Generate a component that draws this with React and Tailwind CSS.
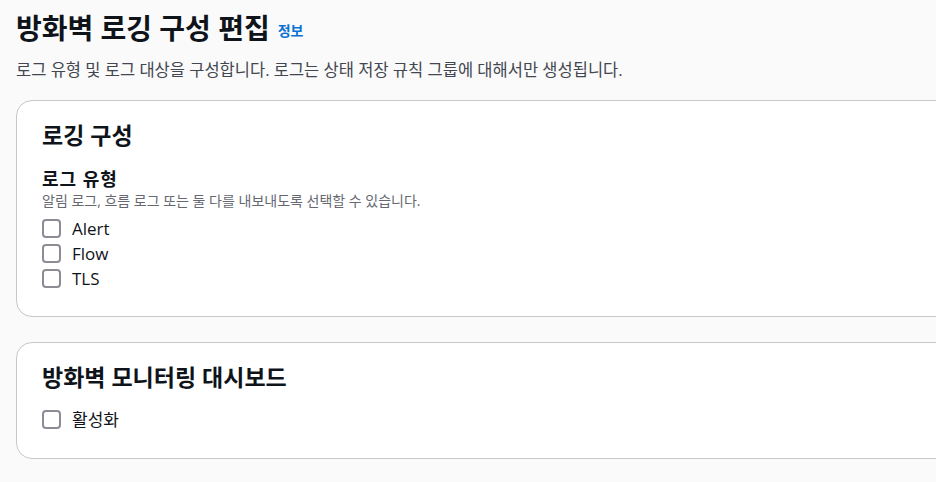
import React, { useState } from 'react';

const font = { fontFamily: '"Open Sans", "Noto Sans CJK KR", sans-serif' };

const Checkbox = ({ label }) => {
  const [checked, setChecked] = useState(false);
  return (
    <label className="flex items-center h-[25px] cursor-pointer">
      <span
        onClick={() => setChecked(!checked)}
        className={`w-[19px] h-[19px] rounded-[4px] border-2 ${checked ? 'bg-[#0972d3] border-[#0972d3]' : 'bg-white border-[#8c8c94]'}`}
      />
      <span className="ml-[11px] text-[17px] text-[#0f141a] leading-[20px]">{label}</span>
    </label>
  );
};

const App = () => {
  return (
    <div className="w-[936px] h-[482px] overflow-hidden bg-[#fafafa]" style={font}>
      <div className="pl-[16px] pt-[13px]">
        <div className="flex items-center h-[30px]">
          <h1 className="text-[28px] font-bold text-[#0f141a] leading-[30px]">방화벽 로깅 구성 편집</h1>
          <a href="#" className="ml-[8px] mt-[4px] text-[14px] font-bold text-[#0972d3]">정보</a>
        </div>
        <p className="mt-[17px] text-[16.5px] text-[#424650] leading-[20px]">
          로그 유형 및 로그 대상을 구성합니다. 로그는 상태 저장 규칙 그룹에 대해서만 생성됩니다.
        </p>

        <div className="mt-[20px] w-[960px] bg-white border border-[#c6c6cd] rounded-[16px] pl-[25px] pt-[21px] pb-[25px]">
          <h2 className="text-[23px] font-bold text-[#0f141a] leading-[26px]">로깅 구성</h2>
          <div className="mt-[21px] text-[18px] tracking-[1px] font-bold text-[#0f141a] leading-[20px]">로그 유형</div>
          <div className="text-[14px] text-[#656871] leading-[18px] mt-[3px]">
            알림 로그, 흐름 로그 또는 둘 다를 내보내도록 선택할 수 있습니다.
          </div>
          <div className="mt-[6px]">
            <Checkbox label="Alert" />
            <Checkbox label="Flow" />
            <Checkbox label="TLS" />
          </div>
        </div>

        <div className="mt-[25px] w-[960px] bg-white border border-[#c6c6cd] rounded-[16px] pl-[25px] pt-[21px] pb-[26px]">
          <h2 className="text-[23px] font-bold text-[#0f141a] leading-[26px]">방화벽 모니터링 대시보드</h2>
          <div className="mt-[17px]">
            <Checkbox label="활성화" />
          </div>
        </div>
      </div>
    </div>
  );
};

export default App;
